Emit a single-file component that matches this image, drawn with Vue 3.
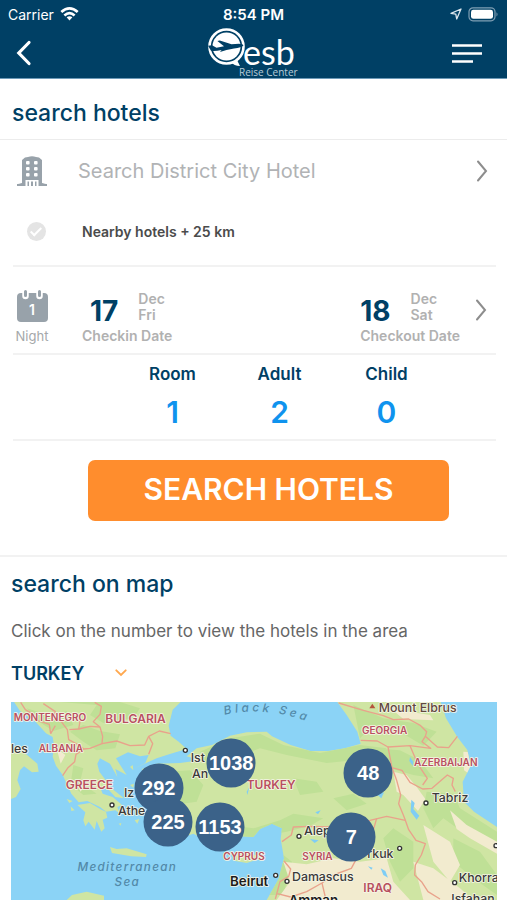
<template>
  <div class="app">
    <header class="header">
      <div class="status">
        <div class="carrier">
          <span>Carrier</span>
          <svg width="19" height="14" viewBox="0 0 19 14" aria-hidden="true">
            <g fill="none" stroke="#fff" stroke-width="2.7">
              <path d="M1.3 5.1Q9.5-2.2 17.7 5.1" />
              <path d="M4.4 8.4Q9.5 3.9 14.6 8.4" />
            </g>
            <path d="M6.6 10.3Q9.5 8 12.4 10.3L9.5 13.4Z" fill="#fff" />
          </svg>
        </div>
        <span class="time">8:54 PM</span>
        <div class="battery">
          <svg width="12" height="12" viewBox="0 0 12 12" aria-hidden="true">
            <path d="M11 1L6.7 11 5.8 6.2 1 5.4Z" fill="none" stroke="#dce6ed" stroke-width="1.3" stroke-linejoin="round" />
          </svg>
          <svg width="31" height="15" viewBox="0 0 31 15" aria-hidden="true">
            <rect x="1" y=".8" width="26" height="13" rx="4" fill="none" stroke="#7f9fb4" stroke-width="1.2" />
            <rect x="3" y="2.8" width="22" height="9" rx="2.4" fill="#fff" />
            <path d="M28.5 5.3Q30.5 7.3 28.5 9.6Z" fill="#7f9fb4" />
          </svg>
        </div>
      </div>
      <div class="nav">
        <button class="icon-btn" type="button" aria-label="Back">
          <svg width="16" height="26" viewBox="0 0 16 26">
            <path d="M13 2.5L2.8 13 13 23.5" fill="none" stroke="#fff" stroke-width="3.2" stroke-linecap="round" />
          </svg>
        </button>
        <svg class="logo" width="94" height="50" viewBox="0 0 94 50" role="img" aria-label="esb Reise Center">
          <path d="M22 34L32 27 30.5 33 33 38Q27 37.8 24 34Z" fill="#fff" />
          <circle cx="19.5" cy="18.5" r="17" fill="#004065" stroke="#fff" stroke-width="2.6" />
          <circle cx="19.5" cy="18.5" r="14" fill="#fff" />
          <path
            d="M1 17.7L5 17.3 9.5 19.7 17 18.3 10.4 13.1 12.8 12.5 24.5 16.2 32 15.7Q36 15.7 36.4 17.5 34.6 19.5 27 20.6L19.5 22 13 23.9 14.6 22Q8 23.3 4 22.7Z"
            fill="#004065"
          />
          <text class="logo-name" x="36" y="37">esb</text>
          <text class="logo-sub" x="32" y="48">Reise Center</text>
        </svg>
        <button class="icon-btn" type="button" aria-label="Menu">
          <svg width="32" height="19" viewBox="0 0 32 19">
            <path d="M1 1.5H31M1 9.5H31M1 17.5H22" stroke="#fff" stroke-width="2.4" />
          </svg>
        </button>
      </div>
    </header>

    <form class="search" @submit.prevent>
      <h1 class="title">search hotels</h1>

      <div class="panel destination">
        <div class="row">
          <label class="side" for="destination" aria-label="Destination">
            <svg width="30" height="31" viewBox="0 0 30 31">
              <path d="M5 28V5L8 2.5 11 2Q15 .3 19 2L22 2.5 25 5V28L30 29V31H0V29Z" fill="#98a2aa" />
              <g fill="#fff">
                <rect x="9" y="6" width="3.6" height="3.6" rx="1" /><rect x="17" y="6" width="3.6" height="3.6" rx="1" />
                <rect x="9" y="12" width="3.6" height="3.6" rx="1" /><rect x="17" y="12" width="3.6" height="3.6" rx="1" />
                <rect x="9" y="18" width="3.6" height="3.6" rx="1" /><rect x="17" y="18" width="3.6" height="3.6" rx="1" />
                <path d="M8.5 25H21.5V31H19.5V26.5H18V31H16V26.5H14V31H12V26.5H10.5V31H8.5Z" />
                <path d="M0 26H4V28L0 29ZM30 26H26V28L30 29Z" />
              </g>
            </svg>
          </label>
          <input id="destination" v-model="destination" class="field" type="text" placeholder="Search District City Hotel" />
          <button class="icon-btn" type="button" aria-label="Choose destination">
            <svg width="12" height="22" viewBox="0 0 12 22"><path d="M2 1.5L10 11 2 20.5" class="chevron" /></svg>
          </button>
        </div>
        <div class="row">
          <span class="side"><input id="nearby" v-model="nearby" class="check" type="checkbox" /></span>
          <label class="nearby" for="nearby">Nearby hotels + 25 km</label>
        </div>
      </div>

      <div class="panel dates">
        <div class="side nights">
          <svg width="31" height="32" viewBox="0 0 31 32" aria-hidden="true">
            <rect x="0" y="3" width="31" height="29" rx="4" fill="#98a2aa" />
            <g fill="none" stroke-linecap="round">
              <path d="M8.5 2V6M22.5 2V6" stroke="#fff" stroke-width="6.5" />
              <path d="M8.5 1.5V5.5M22.5 1.5V5.5" stroke="#98a2aa" stroke-width="3" />
            </g>
            <text class="night-count" x="15" y="25">{{ nights }}</text>
          </svg>
          <span>Night</span>
        </div>
        <button v-for="date in dates" :key="date.label" class="date" type="button">
          <span class="date-top">
            <b class="day">{{ date.day }}</b>
            <span class="month">{{ date.month }}<br />{{ date.weekday }}</span>
          </span>
          <span class="date-label">{{ date.label }}</span>
        </button>
        <button class="icon-btn" type="button" aria-label="Change dates">
          <svg width="12" height="22" viewBox="0 0 12 22"><path d="M2 1.5L10 11 2 20.5" class="chevron" /></svg>
        </button>
      </div>

      <div class="panel guests">
        <button v-for="guest in guests" :key="guest.label" class="guest" type="button">
          <span class="guest-label">{{ guest.label }}</span>
          <span class="guest-count">{{ guest.count }}</span>
        </button>
      </div>

      <button class="submit" type="submit">SEARCH HOTELS</button>
    </form>

    <section class="on-map">
      <h2 class="title">search on map</h2>
      <p class="hint">Click on the number to view the hotels in the area</p>
      <div class="country">
        <select v-model="country" aria-label="Country">
          <option>TURKEY</option>
          <option>GREECE</option>
        </select>
        <svg width="12" height="8" viewBox="0 0 12 8" aria-hidden="true">
          <path d="M1.3 1.3L6 6 10.7 1.3" fill="none" stroke="#ffa84f" stroke-width="1.9" stroke-linecap="round" />
        </svg>
      </div>

      <div class="map">
        <svg class="map-canvas" viewBox="33 21 1458 594">
          <defs>
            <clipPath id="land">
              <path v-for="(shape, i) in land" :key="i" :d="shape" />
            </clipPath>
          </defs>
          <rect x="33" y="21" width="1458" height="594" fill="#8bd3f6" />
          <path v-for="(shape, i) in land" :key="i" :d="shape" fill="#cfe5a3" />
          <g clip-path="url(#land)">
            <path v-for="(shape, i) in forest" :key="i" :d="shape" fill="#bfe096" />
            <path v-for="(shape, i) in desert" :key="i" :d="shape" fill="#f2ebcf" />
          </g>
          <path v-for="(shape, i) in lakes" :key="i" :d="shape" fill="#7fcdf5" />
          <path v-for="(line, i) in borders" :key="i" :d="line" class="border" />
          <path id="black-sea" d="M674 60Q790 30 936 84" fill="none" />
          <text class="sea wide"><textPath href="#black-sea">Black Sea</textPath></text>
          <text class="sea" x="382" y="527" text-anchor="middle">Mediterranean</text>
          <text class="sea" x="382" y="574" text-anchor="middle">Sea</text>
          <path d="M1108 40L1117 26 1126 40Z" fill="#b5543c" />
          <circle v-for="(dot, i) in dots" :key="i" :cx="dot[0]" :cy="dot[1]" r="6" class="dot" />
          <text v-for="label in labels" :key="label.text" :x="label.x" :y="label.y" :class="label.kind">{{ label.text }}</text>
        </svg>
        <button
          v-for="pin in pins"
          :key="pin.count"
          class="pin"
          type="button"
          :style="{ left: pin.x + '%', top: pin.y + '%' }"
        >
          {{ pin.count }}
        </button>
      </div>
    </section>
  </div>
</template>

<script setup>
import { ref } from 'vue';

const destination = ref('');
const nearby = ref(true);
const nights = ref(1);
const country = ref('TURKEY');

const dates = ref([
  { day: 17, month: 'Dec', weekday: 'Fri', label: 'Checkin Date' },
  { day: 18, month: 'Dec', weekday: 'Sat', label: 'Checkout Date' },
]);

const guests = ref([
  { label: 'Room', count: 1 },
  { label: 'Adult', count: 2 },
  { label: 'Child', count: 0 },
]);

// Pin centres, in percent of the map
const pins = [
  { count: 292, x: 30.4, y: 43.2 },
  { count: 1038, x: 45.3, y: 31 },
  { count: 225, x: 32.3, y: 60.8 },
  { count: 1153, x: 43, y: 63 },
  { count: 48, x: 73.5, y: 35.8 },
  { count: 7, x: 70, y: 68 },
];

const land = [
  // Balkans and Greece
  'M42 21L60 48 108 82 138 115 158 126 162 150 158 185 168 212 188 240 202 270 214 296 236 322 262 318 300 336 318 350 346 346 360 356 352 336 366 330 338 306 308 296 300 276 326 284 346 306 372 310 340 284 322 262 298 230 292 206 300 190 330 206 352 246 346 222 380 240 362 212 348 190 384 172 420 184 446 180 436 204 400 222 430 208 470 190 512 176 560 162 536 140 512 122 506 92 518 44 542 21Z',
  'M232 330L270 324 304 344 318 350 322 368 308 374 314 400 304 410 290 378 284 404 266 380 256 394 250 376 256 352Z',
  // Anatolia, the Levant and the Caucasus
  'M426 222L470 206 540 204 600 196 560 184 590 160 636 150 690 122 740 112 800 110 816 124 872 150 932 168 984 168 1034 160 1082 146 1072 110 1040 60 1012 21H1322L1338 70 1372 126 1402 165 1412 212 1388 260 1392 320 1422 350 1491 396V615H800L836 552 852 490 842 432 846 400 816 386 780 402 760 426 700 422 650 452 606 430 580 416 540 430 490 428 456 406 440 370 448 330 414 286 432 260Z',
  // Southern Italy
  'M33 160L70 170 112 206 116 230 96 232 72 214 60 226 52 256 62 282 48 306 33 312Z',
  // Islands
  'M330 456L350 462 380 460 440 478 438 486 394 484 336 474Z',
  'M700 484L730 474 766 480 790 470 772 494 740 504 706 498Z',
  'M200 312L218 318 208 324ZM212 334L224 346 214 348ZM390 270L402 266 400 278ZM404 376L418 372 412 386ZM356 386L364 384 362 392ZM390 216L398 210 400 226Z',
  // North Africa
  'M200 615L216 600 260 590 312 602V615Z',
];

const forest = [
  'M180 21L290 30 270 60 310 84 400 70 420 40 360 21ZM80 40L150 62 200 48 220 90 160 108 110 76Z',
  'M210 110L250 90 300 108 360 118 346 160 290 166 250 140ZM220 210L250 220 240 262 290 296 250 300 212 268Z',
  'M600 170L690 130 780 116 850 150 960 174 1080 150 1160 160 1120 190 980 204 860 180 780 160 700 190 620 210Z',
  'M500 230L570 226 610 270 590 320 520 330ZM600 410L680 390 760 400 840 376 880 356 970 370 930 392 860 410 700 440Z',
  'M880 250L950 260 970 290 900 300ZM1000 310L1060 296 1100 326 1040 346Z',
  'M1060 30L1150 70 1240 84 1310 110 1270 152 1200 110 1110 100 1080 130ZM1120 160L1200 166 1260 196 1300 250 1240 240 1170 220Z',
  'M1280 290L1360 296 1380 340 1491 410V460L1400 420 1330 370 1300 400 1270 340ZM1180 400L1240 440 1240 520 1200 560 1170 500 1150 430Z',
  'M1360 430L1440 470 1491 540V600L1420 550 1360 500ZM800 600L850 480 876 500 850 600Z',
];

const desert = [
  'M850 500L920 508 1000 490 1080 500 1160 490 1180 560 1230 615H830L870 560Z',
  'M1180 230L1220 240 1250 276 1276 312 1254 348 1210 300 1190 290ZM1390 170L1412 172V240L1392 226Z',
  'M1350 346L1400 390 1491 440V476L1410 430 1370 402ZM1270 390L1350 440 1380 510 1350 560 1300 500ZM1240 500L1300 520 1380 580 1420 615H1270Z',
  'M1150 21L1190 44 1290 60 1300 76 1210 72ZM230 264L250 276 242 290ZM170 160L196 180 182 206Z',
];

const lakes = [
  'M1230 186L1240 200 1238 212 1228 198Z',
  'M1234 314L1244 324 1240 342 1258 362 1250 374 1232 350Z',
  'M1130 298L1152 292 1144 310Z',
  'M1142 520L1156 528 1164 548 1150 540Z',
  'M740 290L748 276 742 300ZM946 352L962 346 954 358ZM1104 514L1118 518 1114 524ZM930 432L956 436 944 444Z',
];

const borders = [
  'M62 22L76 44 100 58 112 76 148 88 152 116',
  'M130 26L166 50 160 72 184 80 202 104 206 134 236 150 252 162',
  'M184 80L220 66 240 80 236 102 208 104',
  'M284 22L304 34 300 58 280 80 300 96 308 124 306 146 270 160 252 162 228 178 224 200 204 218 188 242',
  'M236 102L270 94 300 96M306 146L350 138 390 152 434 150 446 124 478 108 512 116',
  'M446 124L458 146 446 178M152 116L166 92',
  'M1016 24L1090 46 1150 62 1180 74 1226 72 1262 92 1280 110 1276 124 1312 156 1346 158 1372 124',
  'M1082 136L1132 138 1164 156 1230 152 1292 160 1266 140 1276 124',
  'M1164 156L1176 218 1206 226 1230 262 1268 282 1296 280 1342 240 1360 250 1356 270 1366 290',
  'M1230 152L1246 190 1262 220 1282 250 1268 270M1176 218L1190 256 1202 300 1196 326 1210 360 1216 376',
  'M846 440L874 420 880 396 930 394 990 396 1110 376 1160 364 1216 376 1226 404 1248 436 1276 446 1264 480 1246 510 1244 540 1266 562 1284 590 1320 612',
  'M1130 370L1110 440 1068 494 1054 520 1000 540 966 564 920 590 872 606 832 596M966 564L978 615',
  'M852 498L872 522 866 544 840 560 826 612',
];

const dots = [
  [556, 166], [336, 330], [1278, 324], [897, 424], [1199, 460],
  [827, 541], [861, 559], [1364, 563], [1488, 452],
];

const labels = [
  { text: 'MONTENEGRO', x: 41, y: 78, kind: 'land-name' },
  { text: 'BULGARIA', x: 316, y: 84, kind: 'land-name large' },
  { text: 'ALBANIA', x: 116, y: 170, kind: 'land-name' },
  { text: 'GREECE', x: 197, y: 283, kind: 'land-name large' },
  { text: 'TURKEY', x: 740, y: 283, kind: 'land-name large' },
  { text: 'GEORGIA', x: 1086, y: 118, kind: 'land-name' },
  { text: 'AZERBAIJAN', x: 1242, y: 213, kind: 'land-name' },
  { text: 'SYRIA', x: 907, y: 495, kind: 'land-name' },
  { text: 'CYPRUS', x: 670, y: 495, kind: 'land-name' },
  { text: 'IRAQ', x: 1090, y: 590, kind: 'land-name large' },
  { text: 'les', x: 33, y: 173, kind: 'city' },
  { text: 'Ist', x: 572, y: 201, kind: 'city' },
  { text: 'An', x: 576, y: 249, kind: 'city' },
  { text: 'Iz', x: 372, y: 305, kind: 'city' },
  { text: 'Athe', x: 354, y: 360, kind: 'city' },
  { text: 'Mount Elbrus', x: 1136, y: 50, kind: 'city peak' },
  { text: 'Tabriz', x: 1295, y: 322, kind: 'city' },
  { text: 'Alep', x: 912, y: 421, kind: 'city' },
  { text: 'rkuk', x: 1102, y: 490, kind: 'city' },
  { text: 'Beirut', x: 690, y: 574, kind: 'city capital' },
  { text: 'Damascus', x: 876, y: 557, kind: 'city' },
  { text: 'Amman', x: 866, y: 631, kind: 'city capital' },
  { text: 'Khorramabad', x: 1376, y: 560, kind: 'city' },
  { text: 'Isfahan', x: 1354, y: 625, kind: 'city' },
];
</script>

<style>
body {
  margin: 0;
  background: #fff;
}
</style>

<style scoped>
.app {
  font-family: Inter, Roboto, sans-serif;
  color: #004065;
  overflow: hidden;
}

button,
input,
select {
  font-family: inherit;
  color: inherit;
  background: none;
  border: 0;
  margin: 0;
  padding: 0;
}

button {
  cursor: pointer;
}

svg {
  display: block;
}

/* Header */
.header {
  background: #004065;
  color: #fff;
  border-bottom: 1px solid #6c9ab8;
}

.status,
.nav {
  display: grid;
  grid-template-columns: 1fr auto 1fr;
  align-items: center;
}

.status {
  height: 28px;
  padding: 0 8px;
  font-size: 14px;
}

.carrier,
.battery {
  display: flex;
  align-items: center;
  gap: 6px;
}

.battery {
  justify-content: flex-end;
}

.time {
  font-size: 15px;
  font-weight: 600;
}

.nav {
  height: 50px;
  padding: 0 16px;
}

.logo-name {
  font: 400 34px Lato, sans-serif;
  fill: #fff;
}

.logo-sub {
  font: 400 10px "Open Sans", sans-serif;
  fill: #b9ccd8;
}

.icon-btn {
  justify-self: start;
  flex: none;
}

.logo + .icon-btn {
  justify-self: end;
  padding-right: 8px;
}

/* Search form */
.title {
  margin: 0;
  font-size: 23px;
  font-weight: 500;
  line-height: 30px;
}

.search {
  border-bottom: 2px solid #f2f2f2;
  padding-bottom: 34px;
}

.search > .title {
  padding: 19px 12px 11px;
  border-bottom: 1px solid #ececec;
}

.panel {
  margin: 0 11px 0 13px;
  border-bottom: 2px solid #f2f2f2;
}

.destination {
  padding-bottom: 3px;
}

.row {
  display: flex;
  align-items: center;
  height: 61px;
  padding-right: 8px;
}

.row .side {
  padding: 0 4px 0 0;
  margin-right: 23px;
}

.row + .row .side {
  padding: 0 0 0 4px;
}

.side {
  display: flex;
  flex: none;
  justify-content: center;
  width: 38px;
}

.field {
  flex: 1;
  min-width: 0;
  font-size: 20px;
  outline: none;
}

.field::placeholder {
  color: #b1b3b5;
  opacity: 1;
}

.chevron {
  fill: none;
  stroke: #8d8d8d;
  stroke-width: 2;
  stroke-linecap: round;
}

.check {
  appearance: none;
  display: flex;
  justify-content: center;
  width: 19px;
  height: 19px;
  border-radius: 50%;
  background: #e4e4e4;
}

.check:checked::after {
  content: "";
  width: 4px;
  height: 9px;
  margin-top: 3px;
  border: solid #fff;
  border-width: 0 2px 2px 0;
  transform: rotate(45deg);
}

.nearby {
  padding-left: 4px;
  font-size: 14px;
  font-weight: 600;
  color: #4b4b4b;
}

.dates {
  display: flex;
  align-items: center;
  height: 86px;
  padding-right: 9px;
}

.nights,
.date {
  padding-top: 14px;
}

.nights {
  flex-direction: column;
  align-items: center;
  gap: 6px;
  font-size: 13px;
  line-height: 16px;
  color: #a5a8aa;
}

.night-count {
  font-size: 14px;
  font-weight: 600;
  fill: #fff;
  text-anchor: middle;
}

.date {
  margin-left: 31px;
  text-align: left;
  font-size: 14px;
  font-weight: 600;
  line-height: 16px;
  color: #b1b1b1;
}

.date + .date {
  margin-left: auto;
  margin-right: 15px;
}

.date-top {
  display: flex;
  align-items: flex-end;
  gap: 20px;
  margin-bottom: 5px;
}

.nights + .date .date-top {
  padding-left: 8px;
}

.day {
  font-size: 28px;
  font-weight: 700;
  line-height: 24px;
  color: #004065;
}

.date-label {
  display: block;
}

.guests {
  display: grid;
  grid-template-columns: repeat(3, 1fr);
  height: 84px;
  padding: 0 56px 0 106px;
}

.guest {
  display: flex;
  flex-direction: column;
  align-items: center;
  padding-top: 8px;
}

.guest-label {
  font-size: 17px;
  font-weight: 600;
  line-height: 22px;
}

.guest-count {
  margin-top: 9px;
  font-size: 30px;
  font-weight: 600;
  line-height: 36px;
  color: #0f93ee;
}

.submit {
  display: block;
  width: calc(100% - 146px);
  height: 61px;
  margin: 19px 58px 0 88px;
  padding-bottom: 3px;
  border-radius: 7px;
  background: #ff8d2d;
  color: #fff;
  font-size: 30px;
  font-weight: 600;
}

/* Map */
.on-map {
  padding: 12px 10px 0 11px;
}

.hint {
  margin: 22px 0 0;
  font-size: 17px;
  line-height: 20px;
  color: #666;
}

.country {
  display: flex;
  align-items: center;
  gap: 30px;
  height: 24px;
  margin: 20px 0 17px;
}

.country select {
  appearance: none;
  font-size: 18px;
  font-weight: 600;
}

.map {
  position: relative;
}

.map-canvas {
  width: 100%;
  height: auto;
}

.border {
  fill: none;
  stroke: #e9a28b;
  stroke-width: 4;
  stroke-linejoin: round;
}

.dot {
  fill: #fff;
  stroke: #333;
  stroke-width: 4;
}

.sea {
  font-size: 35px;
  font-style: italic;
  font-weight: 500;
  letter-spacing: 4px;
  fill: #5289a8;
}

.wide {
  letter-spacing: 10px;
}

.land-name,
.city {
  paint-order: stroke;
  stroke: #f6f5e6;
  stroke-width: 5;
  stroke-linejoin: round;
}

.land-name {
  font-size: 30px;
  font-weight: 600;
  fill: #b8505f;
}

.large {
  font-size: 36px;
}

.city {
  font-size: 37px;
  font-weight: 500;
  fill: #3a3a3a;
}

.peak {
  fill: #614840;
}

.capital {
  font-size: 40px;
  font-weight: 600;
  fill: #1c1c1c;
}

.pin {
  position: absolute;
  width: 49px;
  height: 49px;
  border-radius: 50%;
  background: #3b6289;
  color: #fff;
  font: bold 20px "Liberation Sans", Arial, sans-serif;
  transform: translate(-50%, -50%);
}
</style>
